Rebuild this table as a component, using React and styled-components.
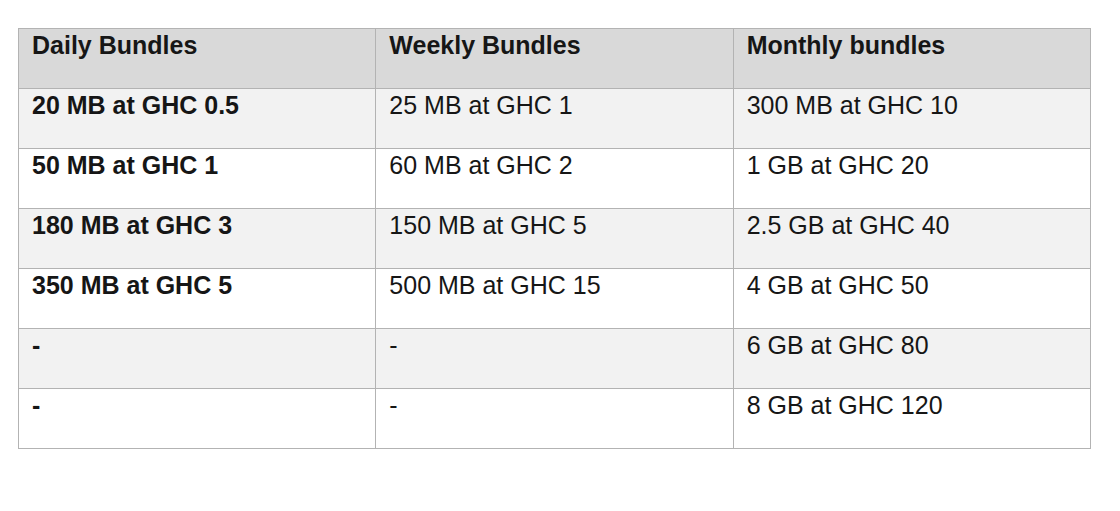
import React from "react";
import styled, { createGlobalStyle } from "styled-components";

const Global = createGlobalStyle`
  html, body { margin: 0; padding: 0; background: #ffffff; }
  body { font-family: "Liberation Sans", Arial, sans-serif; }
`;

const Page = styled.div`
  padding: 28px 0 0 18px;
`;

const Table = styled.table`
  border-collapse: collapse;
  width: 1073px;
  table-layout: fixed;
  font-family: "Liberation Sans", Arial, sans-serif;
  font-size: 25px;
  color: #161616;
`;

const Row = styled.tr`
  height: 60px;
  background: ${(p) => (p.$header ? "#d9d9d9" : p.$shaded ? "#f2f2f2" : "#ffffff")};
`;

const Cell = styled.td`
  border: 1px solid #b3b3b3;
  vertical-align: top;
  padding: 2px 13px 0 13px;
  line-height: 29px;
  font-weight: ${(p) => (p.$bold ? 700 : 400)};
  white-space: nowrap;
`;

const header = ["Daily Bundles", "Weekly Bundles", "Monthly bundles"];
const rows = [
  ["20 MB at GHC 0.5", "25 MB at GHC 1", "300 MB at GHC 10"],
  ["50 MB at GHC 1", "60 MB at GHC 2", "1 GB at GHC 20"],
  ["180 MB at GHC 3", "150 MB at GHC 5", "2.5 GB at GHC 40"],
  ["350 MB at GHC 5", "500 MB at GHC 15", "4 GB at GHC 50"],
  ["-", "-", "6 GB at GHC 80"],
  ["-", "-", "8 GB at GHC 120"],
];

export default function App() {
  return (
    <Page>
      <Global />
      <Table>
        <tbody>
          <Row $header>
            {header.map((h) => (
              <Cell key={h} $bold>{h}</Cell>
            ))}
          </Row>
          {rows.map((r, i) => (
            <Row key={i} $shaded={i % 2 === 0}>
              {r.map((c, j) => (
                <Cell key={j} $bold={j === 0}>{c}</Cell>
              ))}
            </Row>
          ))}
        </tbody>
      </Table>
    </Page>
  );
}
